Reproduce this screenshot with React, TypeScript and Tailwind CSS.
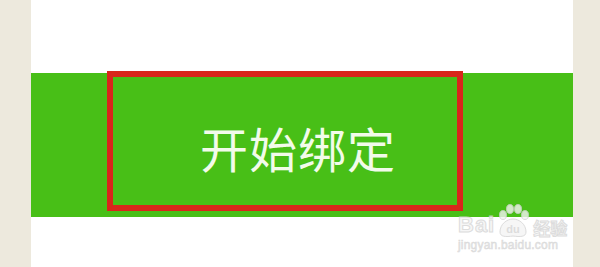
export default function App() {
  return (
    <div className="relative flex h-[267px] w-[600px] overflow-hidden bg-[#ede9dd] pl-[31px] pr-[27px]">
      <div className="flex flex-1 flex-col bg-white">
        <div className="h-[73px]" />
        <div className="flex h-[144px] bg-[#48bf17]">
          <div className="ml-[76px] mt-[-2px] flex h-[140px] w-[356px] items-center justify-center border-[6px] border-[#d8261b] pl-[26px] pt-[12px]">
            <span
              className="text-[48px] leading-none tracking-[1px] text-[#f2fbea]"
              style={{ fontFamily: '"Noto Sans CJK SC", sans-serif' }}
            >
              开始绑定
            </span>
          </div>
        </div>
      </div>

      {/* baidu jingyan watermark */}
      <div className="absolute left-[458px] top-[204px] flex flex-col items-start opacity-80">
        <div className="flex items-end">
          <span
            className="text-[22px] font-bold leading-none tracking-[1px] text-[#f4f4f4] [-webkit-text-stroke:1px_#d4d4d4]"
            style={{ fontFamily: '"Liberation Sans", sans-serif' }}
          >
            Bai
          </span>
          <svg width="36" height="34" viewBox="0 0 36 34" className="-mb-[2px]">
            <g fill="#f4f4f4" stroke="#d4d4d4" strokeWidth="1">
              <ellipse cx="8" cy="11" rx="3.5" ry="4.5" />
              <ellipse cx="15" cy="5" rx="3.5" ry="4.5" />
              <ellipse cx="23" cy="5" rx="3.5" ry="4.5" />
              <ellipse cx="30" cy="11" rx="3.5" ry="4.5" />
              <path d="M5 28 C5 20 12 15 18 15 C24 15 31 20 31 28 C31 33 25 33 18 32 C11 33 5 33 5 28 Z" />
            </g>
            <text
              x="18"
              y="29"
              textAnchor="middle"
              fontSize="11"
              fontWeight="bold"
              fill="#d4d4d4"
              fontFamily="Liberation Sans, sans-serif"
            >
              du
            </text>
          </svg>
          <span
            className="ml-[2px] text-[17px] font-bold leading-none text-[#f4f4f4] [-webkit-text-stroke:1px_#d4d4d4]"
            style={{ fontFamily: '"Noto Sans CJK SC", sans-serif' }}
          >
            经验
          </span>
        </div>
        <span
          className="mt-[3px] text-[12px] leading-none tracking-[0.2px] text-[#e2e2e2] [-webkit-text-stroke:0.5px_#d0d0d0]"
          style={{ fontFamily: '"Liberation Sans", sans-serif' }}
        >
          jingyan.baidu.com
        </span>
      </div>
    </div>
  );
}
